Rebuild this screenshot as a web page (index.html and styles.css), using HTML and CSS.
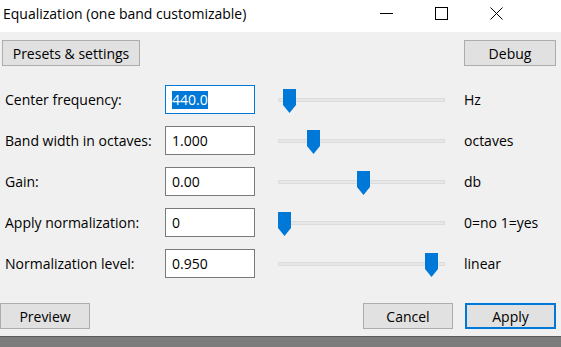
FILE: index.html
```html
<!DOCTYPE html>
<html lang="en">
<head>
    <meta charset="UTF-8">
    <title>Equalization (one band customizable)</title>
    <link rel="stylesheet" href="styles.css">
</head>
<body>
    <div class="window">
        <div class="titlebar">
            <span class="title">Equalization (one band customizable)</span>
            <div class="controls">
                <span class="ctl">
                    <svg width="13" height="13" viewBox="0 0 13 13"><path d="M0 6.5H13" stroke="#000" stroke-width="1"/></svg>
                </span>
                <span class="ctl">
                    <svg width="13" height="13" viewBox="0 0 13 13"><rect x="0.5" y="0.5" width="12" height="12" fill="none" stroke="#000" stroke-width="1"/></svg>
                </span>
                <span class="ctl">
                    <svg width="13" height="13" viewBox="0 0 13 13"><path d="M0.5 0.5L12.5 12.5M12.5 0.5L0.5 12.5" stroke="#000" stroke-width="1"/></svg>
                </span>
            </div>
        </div>

        <div class="dialog">
            <div class="toolbar">
                <button class="btn btn-presets">Presets &amp; settings</button>
                <button class="btn btn-debug">Debug</button>
            </div>

            <div class="params">
                <div class="param">
                    <span class="label">Center frequency:</span>
                    <span class="field focused"><span class="selected">440.0</span></span>
                    <div class="slider"><div class="track"></div><svg class="thumb" style="left: 5px" width="13" height="24" viewBox="0 0 13 24"><path d="M0 0H13V16L6.5 24L0 16Z" fill="#0078d7"/></svg></div>
                    <span class="unit">Hz</span>
                </div>
                <div class="param">
                    <span class="label">Band width in octaves:</span>
                    <span class="field">1.000</span>
                    <div class="slider"><div class="track"></div><svg class="thumb" style="left: 29px" width="13" height="24" viewBox="0 0 13 24"><path d="M0 0H13V16L6.5 24L0 16Z" fill="#0078d7"/></svg></div>
                    <span class="unit">octaves</span>
                </div>
                <div class="param">
                    <span class="label">Gain:</span>
                    <span class="field">0.00</span>
                    <div class="slider"><div class="track"></div><svg class="thumb" style="left: 79px" width="13" height="24" viewBox="0 0 13 24"><path d="M0 0H13V16L6.5 24L0 16Z" fill="#0078d7"/></svg></div>
                    <span class="unit">db</span>
                </div>
                <div class="param">
                    <span class="label">Apply normalization:</span>
                    <span class="field">0</span>
                    <div class="slider"><div class="track"></div><svg class="thumb" style="left: 0px" width="13" height="24" viewBox="0 0 13 24"><path d="M0 0H13V16L6.5 24L0 16Z" fill="#0078d7"/></svg></div>
                    <span class="unit">0=no 1=yes</span>
                </div>
                <div class="param">
                    <span class="label">Normalization level:</span>
                    <span class="field">0.950</span>
                    <div class="slider"><div class="track"></div><svg class="thumb" style="left: 147px" width="13" height="24" viewBox="0 0 13 24"><path d="M0 0H13V16L6.5 24L0 16Z" fill="#0078d7"/></svg></div>
                    <span class="unit">linear</span>
                </div>
            </div>

            <div class="actions">
                <button class="btn btn-preview">Preview</button>
                <div class="actions-right">
                    <button class="btn btn-cancel">Cancel</button>
                    <button class="btn btn-apply">Apply</button>
                </div>
            </div>
        </div>

        <div class="desktop"></div>
    </div>
</body>
</html>
```

FILE: styles.css
```css
* {
    margin: 0;
    padding: 0;
    box-sizing: border-box;
}

body {
    font-family: 'Open Sans', 'Noto Sans', sans-serif;
    font-size: 14px;
    color: #000;
    background: #f0f0f0;
    width: 561px;
    height: 347px;
    overflow: hidden;
}

.window {
    display: flex;
    flex-direction: column;
    height: 347px;
}

.titlebar {
    height: 32px;
    background: #fff;
    display: flex;
    align-items: center;
    justify-content: space-between;
    padding-left: 3px;
}

.title {
    font-size: 14px;
    margin-top: -5px;
}

.controls {
    display: flex;
    margin-right: 37px;
    margin-top: -6px;
}

.ctl {
    width: 55px;
    display: flex;
    justify-content: center;
}

.dialog {
    flex: 1;
    padding: 8px 5px 0 2px;
    display: flex;
    flex-direction: column;
}

.toolbar {
    display: flex;
    justify-content: space-between;
}

.btn {
    font-family: inherit;
    font-size: 14px;
    height: 26px;
    background: #e1e1e1;
    border: 1px solid #adadad;
    color: #000;
}

.btn-presets {
    width: 138px;
}

.btn-debug {
    width: 92px;
}

.params {
    margin-top: 19px;
    padding-left: 3px;
    display: flex;
    flex-direction: column;
    gap: 12px;
}

.param {
    display: flex;
    align-items: center;
    height: 29px;
}

.label {
    width: 160px;
}

.field {
    width: 90px;
    height: 29px;
    background: #fff;
    border: 1px solid #7a7a7a;
    padding-left: 6px;
    display: flex;
    align-items: center;
}

.field.focused {
    border-color: #0078d7;
}

.selected {
    background: #0078d7;
    color: #fff;
    line-height: 18px;
}

.slider {
    position: relative;
    width: 167px;
    height: 29px;
    margin-left: 23px;
}

.track {
    position: absolute;
    left: 0;
    right: 0;
    top: 13px;
    height: 4px;
    background: #e7e7e7;
    border: 1px solid #dcdcdc;
}

.thumb {
    position: absolute;
    top: 4px;
}

.unit {
    margin-left: 19px;
}

.actions {
    margin-top: 25px;
    display: flex;
    justify-content: space-between;
    margin-left: -2px;
}

.actions-right {
    display: flex;
    gap: 12px;
}

.btn-preview {
    width: 90px;
}

.btn-cancel {
    width: 90px;
}

.btn-apply {
    width: 91px;
    border: 2px solid #0078d7;
}

.desktop {
    height: 11px;
    background: #7c7c7c;
    border-top: 1px solid #5a5a5a;
}
```
